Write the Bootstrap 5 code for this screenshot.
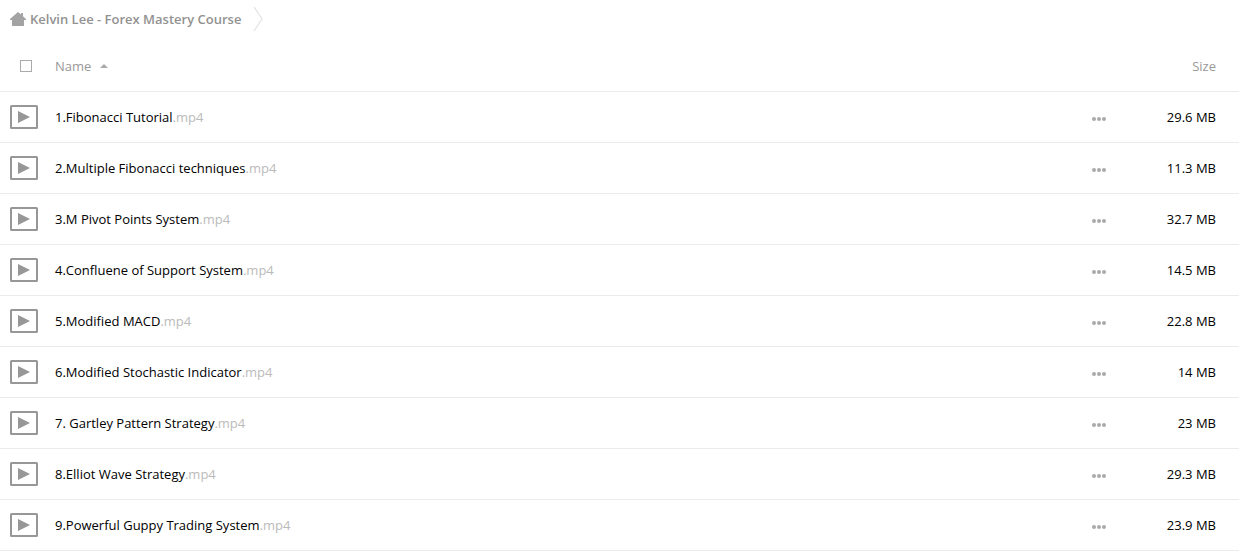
<!DOCTYPE html>
<html lang="en">
<head>
<meta charset="utf-8">
<meta name="viewport" content="width=device-width, initial-scale=1">
<title>Kelvin Lee - Forex Mastery Course</title>
<link href="https://cdn.jsdelivr.net/npm/bootstrap@5.3.0/dist/css/bootstrap.min.css" rel="stylesheet">
<style>
body { font-family: "Open Sans", sans-serif; font-size: 13px; line-height: 20px; color: #000; background: #fff; }
svg { display: block; flex: none; }
.crumbs { height: 40px; padding: 7px 10px 9px; }
.crumbs a { color: #929292; font-weight: 600; gap: 4px; }
.crumb-sep { margin-left: 12px; }
.files { table-layout: fixed; }
.files th, .files td { height: 51px; padding: 0; border-bottom: 1px solid #ebebeb; vertical-align: middle; }
.files th { font-weight: 400; color: #999; padding-top: 2px; }
.col-icon { width: 55px; }
.col-menu { width: 49px; }
.col-size { width: 110px; }
.files .size { text-align: right; padding-right: 23px; }
.pick { appearance: none; display: block; width: 12px; height: 12px; margin: 0 0 0 20px; border: 1px solid #aaa; background: #fff; }
.pick:checked { background: #999; }
.plain { border: 0; background: none; padding: 0; color: inherit; }
.files td a { color: #000; text-decoration: none; }
.files td a span { color: #bbb; }
.thumb { margin-left: 10px; }
.more { display: block; padding: 8px 0 4px; }
</style>
</head>
<body>
<svg width="0" height="0" class="position-absolute" aria-hidden="true">
  <symbol id="video" viewBox="0 0 28 24"><rect x="1" y="1" width="26" height="22" rx=".5" fill="#fff" stroke="#979797" stroke-width="2"/><path d="M8 6v12l12-6z" fill="#979797"/></symbol>
  <symbol id="dots" viewBox="0 0 14 4"><g fill="#aaa"><circle cx="2" cy="2" r="2"/><circle cx="7" cy="2" r="2"/><circle cx="12" cy="2" r="2"/></g></symbol>
</svg>
<nav class="crumbs d-flex align-items-center" aria-label="Breadcrumb">
  <a href="#" class="d-flex align-items-center text-decoration-none text-nowrap">
    <svg width="16" height="14" viewBox="0 0 16 14" aria-hidden="true"><path d="M8 0 11 2.500V1h2v3.300L16 7v1h-2v6H2V8H0V7z" fill="#a3a3a3"/></svg>
    <span>Kelvin Lee - Forex Mastery Course</span>
  </a>
  <svg class="crumb-sep" width="10" height="24" viewBox="0 0 10 24" fill="none" stroke="#e3e3e3" stroke-width="1.200" aria-hidden="true"><path d="M1 0 9 12 1 24"/></svg>
</nav>
<main>
<table class="files w-100">
  <colgroup><col class="col-icon"><col><col class="col-menu"><col class="col-size"></colgroup>
  <thead>
    <tr>
      <th><input class="pick" type="checkbox" aria-label="Select all"></th>
      <th><button type="button" class="plain d-flex align-items-center">Name <svg class="ms-2" width="10" height="4" viewBox="0 0 10 4" aria-hidden="true"><path d="M1 4 5 0l4 4z" fill="#aaa"/></svg></button></th>
      <th></th>
      <th class="size"><button type="button" class="plain">Size</button></th>
    </tr>
  </thead>
  <tbody>
    <tr><td><svg class="thumb" width="28" height="24"><use href="#video"/></svg></td><td><a href="#">1.Fibonacci Tutorial<span>.mp4</span></a></td><td><button type="button" class="plain more ms-1" aria-label="More"><svg class="ms-2" width="14" height="4"><use href="#dots"/></svg></button></td><td class="size">29.6 MB</td></tr>
    <tr><td><svg class="thumb" width="28" height="24"><use href="#video"/></svg></td><td><a href="#">2.Multiple Fibonacci techniques<span>.mp4</span></a></td><td><button type="button" class="plain more ms-1" aria-label="More"><svg class="ms-2" width="14" height="4"><use href="#dots"/></svg></button></td><td class="size">11.3 MB</td></tr>
    <tr><td><svg class="thumb" width="28" height="24"><use href="#video"/></svg></td><td><a href="#">3.M Pivot Points System<span>.mp4</span></a></td><td><button type="button" class="plain more ms-1" aria-label="More"><svg class="ms-2" width="14" height="4"><use href="#dots"/></svg></button></td><td class="size">32.7 MB</td></tr>
    <tr><td><svg class="thumb" width="28" height="24"><use href="#video"/></svg></td><td><a href="#">4.Confluene of Support System<span>.mp4</span></a></td><td><button type="button" class="plain more ms-1" aria-label="More"><svg class="ms-2" width="14" height="4"><use href="#dots"/></svg></button></td><td class="size">14.5 MB</td></tr>
    <tr><td><svg class="thumb" width="28" height="24"><use href="#video"/></svg></td><td><a href="#">5.Modified MACD<span>.mp4</span></a></td><td><button type="button" class="plain more ms-1" aria-label="More"><svg class="ms-2" width="14" height="4"><use href="#dots"/></svg></button></td><td class="size">22.8 MB</td></tr>
    <tr><td><svg class="thumb" width="28" height="24"><use href="#video"/></svg></td><td><a href="#">6.Modified Stochastic Indicator<span>.mp4</span></a></td><td><button type="button" class="plain more ms-1" aria-label="More"><svg class="ms-2" width="14" height="4"><use href="#dots"/></svg></button></td><td class="size">14 MB</td></tr>
    <tr><td><svg class="thumb" width="28" height="24"><use href="#video"/></svg></td><td><a href="#">7. Gartley Pattern Strategy<span>.mp4</span></a></td><td><button type="button" class="plain more ms-1" aria-label="More"><svg class="ms-2" width="14" height="4"><use href="#dots"/></svg></button></td><td class="size">23 MB</td></tr>
    <tr><td><svg class="thumb" width="28" height="24"><use href="#video"/></svg></td><td><a href="#">8.Elliot Wave Strategy<span>.mp4</span></a></td><td><button type="button" class="plain more ms-1" aria-label="More"><svg class="ms-2" width="14" height="4"><use href="#dots"/></svg></button></td><td class="size">29.3 MB</td></tr>
    <tr><td><svg class="thumb" width="28" height="24"><use href="#video"/></svg></td><td><a href="#">9.Powerful Guppy Trading System<span>.mp4</span></a></td><td><button type="button" class="plain more ms-1" aria-label="More"><svg class="ms-2" width="14" height="4"><use href="#dots"/></svg></button></td><td class="size">23.9 MB</td></tr>
  </tbody>
</table>
</main>
<script src="https://cdn.jsdelivr.net/npm/bootstrap@5.3.0/dist/js/bootstrap.bundle.min.js"></script>
</body>
</html>
